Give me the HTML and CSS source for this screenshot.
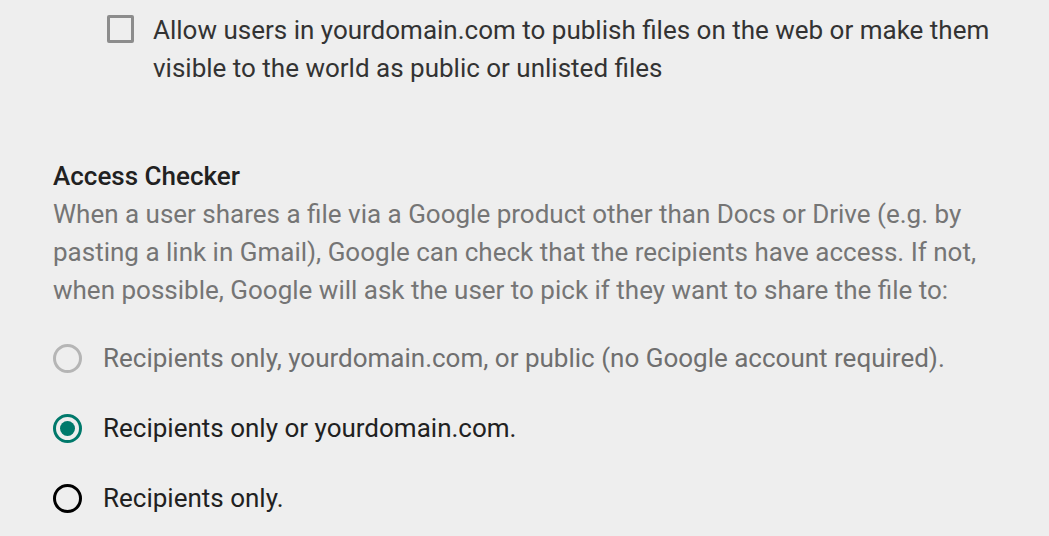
FILE: index.html
```html
<!DOCTYPE html>
<html>
<head>
<meta charset="utf-8">
<link rel="stylesheet" href="styles.css">
</head>
<body>
<div class="page">
  <label class="check-row">
    <span class="checkbox"></span>
    <span class="check-text">Allow users in yourdomain.com to publish files on the web or make them visible to the world as public or unlisted files</span>
  </label>

  <section class="section">
    <h2 class="title">Access Checker</h2>
    <p class="desc">When a user shares a file via a Google product other than Docs or Drive (e.g. by pasting a link in Gmail), Google can check that the recipients have access. If not, when possible, Google will ask the user to pick if they want to share the file to:</p>

    <div class="radios">
      <label class="radio-row disabled">
        <span class="radio"></span>
        <span class="radio-text">Recipients only, yourdomain.com, or public (no Google account required).</span>
      </label>
      <label class="radio-row checked">
        <span class="radio"></span>
        <span class="radio-text">Recipients only or yourdomain.com.</span>
      </label>
      <label class="radio-row">
        <span class="radio"></span>
        <span class="radio-text">Recipients only.</span>
      </label>
    </div>
  </section>
</div>
</body>
</html>
```

FILE: styles.css
```css
html, body {
  margin: 0;
  padding: 0;
  background: #eeeeee;
}

.page {
  font-family: Roboto, "Noto Sans", sans-serif;
  font-size: 26px;
  line-height: 38px;
  padding: 11px 20px 0 53px;
}

.check-row {
  display: flex;
  align-items: flex-start;
  padding-left: 54px;
  gap: 19px;
}

.checkbox {
  flex: none;
  box-sizing: border-box;
  width: 27px;
  height: 28px;
  margin-top: 4px;
  border: 3px solid #8c8c8c;
  border-radius: 2px;
}

.check-text {
  color: #333333;
}

.section {
  margin-top: 70px;
}

.title {
  margin: 0;
  font-size: 26px;
  font-weight: 500;
  line-height: 38px;
  color: #212121;
}

.desc {
  margin: 0;
  color: #757575;
}

.radios {
  display: flex;
  flex-direction: column;
  gap: 32px;
  margin-top: 30px;
}

.radio-row {
  display: flex;
  align-items: center;
  gap: 21px;
}

.radio {
  flex: none;
  box-sizing: border-box;
  width: 29px;
  height: 29px;
  border: 3px solid #000000;
  border-radius: 50%;
  display: flex;
  align-items: center;
  justify-content: center;
}

.radio-text {
  color: #212121;
}

.disabled .radio {
  border-color: #b5b5b5;
}

.disabled .radio-text {
  color: #6f6f6f;
}

.checked .radio {
  border-color: #00796b;
}

.checked .radio::after {
  content: "";
  width: 15px;
  height: 15px;
  border-radius: 50%;
  background: #00796b;
}
```
